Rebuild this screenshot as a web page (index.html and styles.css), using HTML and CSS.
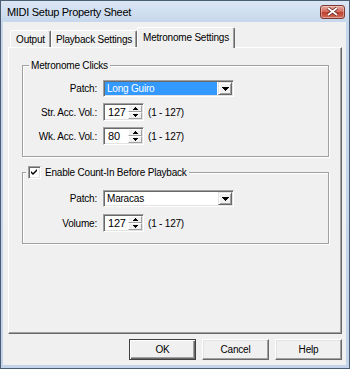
FILE: index.html
```html
<!DOCTYPE html>
<html lang="en">
  <head>
    <meta charset="UTF-8" />
    <meta name="viewport" content="width=device-width, initial-scale=1.0" />
    <title>MIDI Setup Property Sheet</title>
    <link rel="stylesheet" href="styles.css">
  </head>
  <body>
    <div class="window">
      <div class="titlebar">
        <span class="title">MIDI Setup Property Sheet</span>
        <div class="close-btn">
          <svg width="11" height="9" viewBox="0 0 11 9">
            <path d="M1 1L10 8M10 1L1 8" stroke="#5a1a14" stroke-width="3.2" />
            <path d="M1 1L10 8M10 1L1 8" stroke="#fff" stroke-width="1.8" />
          </svg>
        </div>
      </div>

      <div class="client">
        <div class="tabs">
          <div class="tab tab-output">Output</div>
          <div class="tab tab-playback">Playback Settings</div>
          <div class="tab tab-metronome active">Metronome Settings</div>
        </div>

        <div class="panel">
          <div class="group group-clicks">
            <div class="group-title">Metronome Clicks</div>
            <div class="rows">
              <div class="row">
                <span class="row-label">Patch:</span>
                <div class="combo">
                  <span class="combo-text selected">Long Guiro</span>
                  <span class="combo-btn">
                    <svg width="7" height="4" viewBox="0 0 7 4"><path d="M0 0h7v1h-1v1h-1v1h-1v1h-1v-1h-1v-1h-1v-1h-1z" /></svg>
                  </span>
                </div>
              </div>
              <div class="row">
                <span class="row-label">Str. Acc. Vol.:</span>
                <div class="spin">
                  <span class="spin-val">127</span>
                  <span class="spin-btns">
                    <span class="spin-btn"><svg width="5" height="3" viewBox="0 0 5 3"><path d="M2 0h1v1h1v1h1v1h-5v-1h1v-1h1z" /></svg></span>
                    <span class="spin-btn"><svg width="5" height="3" viewBox="0 0 5 3"><path d="M0 0h5v1h-1v1h-1v1h-1v-1h-1v-1h-1z" /></svg></span>
                  </span>
                </div>
                <span class="range">(1 - 127)</span>
              </div>
              <div class="row">
                <span class="row-label">Wk. Acc. Vol.:</span>
                <div class="spin">
                  <span class="spin-val">80</span>
                  <span class="spin-btns">
                    <span class="spin-btn"><svg width="5" height="3" viewBox="0 0 5 3"><path d="M2 0h1v1h1v1h1v1h-5v-1h1v-1h1z" /></svg></span>
                    <span class="spin-btn"><svg width="5" height="3" viewBox="0 0 5 3"><path d="M0 0h5v1h-1v1h-1v1h-1v-1h-1v-1h-1z" /></svg></span>
                  </span>
                </div>
                <span class="range">(1 - 127)</span>
              </div>
            </div>
          </div>

          <div class="group group-countin">
            <div class="group-title check-title">
              <span class="checkbox">
                <svg width="7" height="7" viewBox="0 0 7 7"><path d="M6 0v2l-4 4-2-2v-2l2 2z" /></svg>
              </span>
              <span>Enable Count-In Before Playback</span>
            </div>
            <div class="rows">
              <div class="row">
                <span class="row-label">Patch:</span>
                <div class="combo">
                  <span class="combo-text">Maracas</span>
                  <span class="combo-btn">
                    <svg width="7" height="4" viewBox="0 0 7 4"><path d="M0 0h7v1h-1v1h-1v1h-1v1h-1v-1h-1v-1h-1v-1h-1z" /></svg>
                  </span>
                </div>
              </div>
              <div class="row">
                <span class="row-label">Volume:</span>
                <div class="spin">
                  <span class="spin-val">127</span>
                  <span class="spin-btns">
                    <span class="spin-btn"><svg width="5" height="3" viewBox="0 0 5 3"><path d="M2 0h1v1h1v1h1v1h-5v-1h1v-1h1z" /></svg></span>
                    <span class="spin-btn"><svg width="5" height="3" viewBox="0 0 5 3"><path d="M0 0h5v1h-1v1h-1v1h-1v-1h-1v-1h-1z" /></svg></span>
                  </span>
                </div>
                <span class="range">(1 - 127)</span>
              </div>
            </div>
          </div>
        </div>

        <div class="buttons">
          <button class="btn default">OK</button>
          <button class="btn">Cancel</button>
          <button class="btn">Help</button>
        </div>
      </div>
    </div>
  </body>
</html>
```

FILE: styles.css
```css
* {
  box-sizing: border-box;
}

body {
  margin: 0;
  font-family: "Liberation Sans", Arial, sans-serif;
  font-size: 10px;
  letter-spacing: -0.2px;
  color: #000;
}

.window {
  width: 350px;
  height: 369px;
  display: flex;
  flex-direction: column;
  padding: 0 3px 3px 2px;
  border: 1px solid #4b5d73;
  background: linear-gradient(#dbe6f4, #c6d7ec 22px, #c3d4ea);
}

.titlebar {
  height: 21px;
  display: flex;
  align-items: center;
  justify-content: space-between;
  padding: 0 1px 0 4px;
}

.title {
  font-size: 11px;
  letter-spacing: -0.3px;
}

.close-btn {
  width: 25px;
  height: 14px;
  display: flex;
  align-items: center;
  justify-content: center;
  border: 1px solid #7e3a32;
  border-radius: 3px;
  background: linear-gradient(#e8a89e, #d26f61 45%, #c0402e 55%, #d0705c);
  box-shadow: inset 0 0 0 1px rgba(255, 255, 255, 0.35);
}

.client {
  flex: 1;
  background-color: #f0f0f0;
  padding: 5px 0 0 5px;
}

/* tabs */

.tabs {
  height: 20px;
  display: flex;
  align-items: flex-end;
  padding-left: 2px;
}

.tab {
  height: 17px;
  display: flex;
  align-items: center;
  justify-content: center;
  border: 1px solid;
  border-bottom: none;
  border-color: #fff #696969 #fff #fff;
  border-radius: 2px 2px 0 0;
  box-shadow: inset -1px 0 #a0a0a0;
  background-color: #f0f0f0;
}

.tab-output {
  width: 41px;
}

.tab-playback {
  width: 86px;
}

.tab-metronome {
  width: 98px;
}

.tab.active {
  height: 21px;
  margin-bottom: -1px;
  padding-bottom: 2px;
  position: relative;
  z-index: 1;
}

.panel {
  width: 334px;
  height: 287px;
  padding-top: 17px;
  border: 1px solid;
  border-color: #fff #696969 #696969 #fff;
  box-shadow: inset -1px -1px #a0a0a0;
}

/* group boxes */

.group {
  width: 307px;
  margin-left: 13px;
  border: 1px solid #a0a0a0;
  box-shadow: inset 1px 1px #fff, 1px 1px #fff;
}

.group-clicks {
  padding-bottom: 11px;
}

.group-countin {
  margin-top: 15px;
  padding-bottom: 11px;
}

.group-title {
  display: table;
  height: 13px;
  line-height: 13px;
  margin: -7px 0 0 6px;
  padding: 0 2px;
  background-color: #f0f0f0;
}

.check-title {
  display: flex;
  width: max-content;
  align-items: center;
  margin-left: 3px;
}

.checkbox {
  width: 13px;
  height: 13px;
  display: flex;
  align-items: center;
  justify-content: center;
  margin-right: 4px;
  border: 1px solid;
  border-color: #a0a0a0 #fff #fff #a0a0a0;
  box-shadow: inset 1px 1px #696969, inset -1px -1px #e3e3e3;
  background-color: #fff;
}

.rows {
  display: flex;
  flex-direction: column;
  gap: 6px;
  padding-top: 8px;
}

.group-countin .rows {
  gap: 7px;
  padding-top: 11px;
}

.row {
  display: flex;
  align-items: center;
}

.row-label {
  width: 74px;
  margin-right: 6px;
  text-align: right;
}

/* combo box */

.combo {
  width: 131px;
  height: 17px;
  display: flex;
  padding: 1px;
  border: 1px solid;
  border-color: #a0a0a0 #fff #fff #a0a0a0;
  box-shadow: inset 1px 1px #696969, inset -1px -1px #e3e3e3;
  background-color: #fff;
}

.combo-text {
  flex: 1;
  margin-right: 1px;
  padding-left: 2px;
  line-height: 13px;
}

.combo-text.selected {
  background-color: #3399ff;
  color: #fff;
}

.combo-btn {
  width: 14px;
  display: flex;
  align-items: center;
  justify-content: center;
  border: 1px solid;
  border-color: #e3e3e3 #696969 #696969 #e3e3e3;
  box-shadow: inset 1px 1px #fff, inset -1px -1px #a0a0a0;
  background-color: #f0f0f0;
}

/* spinner */

.spin {
  width: 41px;
  height: 18px;
  display: flex;
  padding: 1px;
  border: 1px solid;
  border-color: #a0a0a0 #fff #fff #a0a0a0;
  box-shadow: inset 1px 1px #696969, inset -1px -1px #e3e3e3;
  background-color: #fff;
}

.spin-val {
  flex: 1;
  padding-left: 3px;
  font-size: 11px;
  line-height: 14px;
}

.spin-btns {
  width: 14px;
  display: flex;
  flex-direction: column;
}

.spin-btn {
  flex: 1;
  display: flex;
  align-items: center;
  justify-content: center;
  border: 1px solid;
  border-color: #fff #a0a0a0 #a0a0a0 #fff;
  background-color: #f0f0f0;
}

.range {
  margin-left: 4px;
}

/* dialog buttons */

.buttons {
  display: flex;
  justify-content: flex-end;
  gap: 6px;
  margin-top: 5px;
  padding-right: 4px;
}

.btn {
  width: 67px;
  height: 21px;
  padding: 0;
  font-family: inherit;
  font-size: 10px;
  letter-spacing: -0.2px;
  color: #000;
  border: 1px solid;
  border-color: #fff #696969 #696969 #fff;
  box-shadow: inset -1px -1px #a0a0a0, inset 1px 1px #e3e3e3;
  background-color: #f0f0f0;
}

.btn.default {
  border-color: #404040;
  box-shadow: inset 1px 1px #fff, inset -1px -1px #696969, inset -2px -2px #a0a0a0;
}
```
